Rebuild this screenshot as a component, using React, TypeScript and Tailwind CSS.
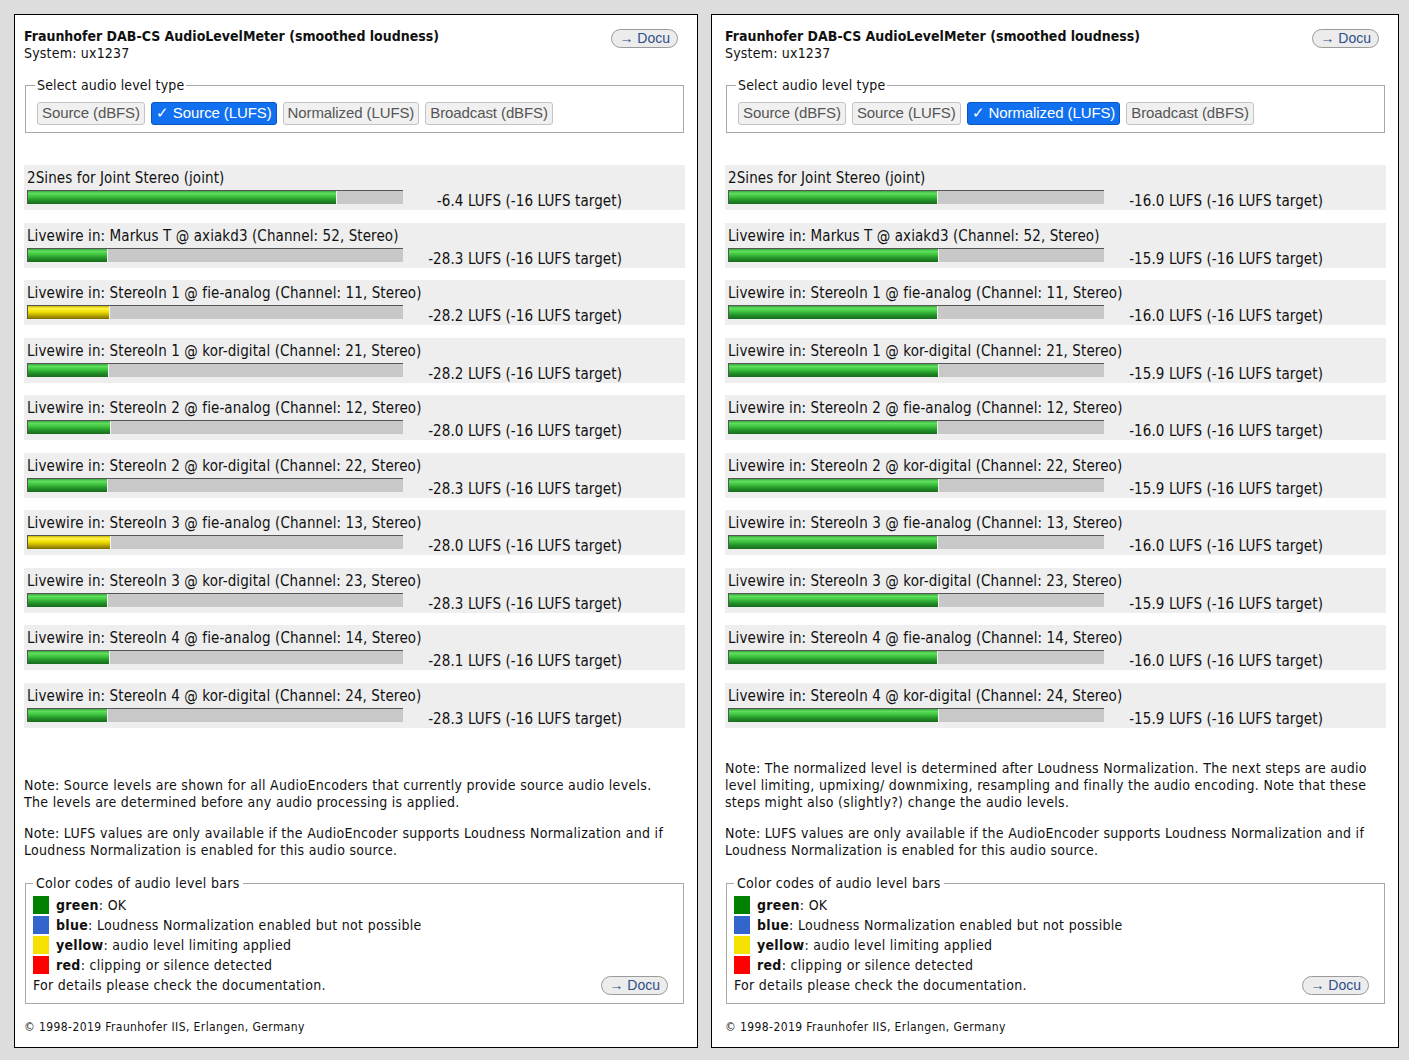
import React from "react"

type Row = { label: string; value: string; fill: number; color: "green" | "yellow" }

const FONT = "font-['DejaVu_Sans_Condensed','DejaVu_Sans',sans-serif]"
const BTN_FONT = "font-['Liberation_Sans',Arial,sans-serif]"

const labels = [
  "2Sines for Joint Stereo (joint)",
  "Livewire in: Markus T @ axiakd3 (Channel: 52, Stereo)",
  "Livewire in: StereoIn 1 @ fie-analog (Channel: 11, Stereo)",
  "Livewire in: StereoIn 1 @ kor-digital (Channel: 21, Stereo)",
  "Livewire in: StereoIn 2 @ fie-analog (Channel: 12, Stereo)",
  "Livewire in: StereoIn 2 @ kor-digital (Channel: 22, Stereo)",
  "Livewire in: StereoIn 3 @ fie-analog (Channel: 13, Stereo)",
  "Livewire in: StereoIn 3 @ kor-digital (Channel: 23, Stereo)",
  "Livewire in: StereoIn 4 @ fie-analog (Channel: 14, Stereo)",
  "Livewire in: StereoIn 4 @ kor-digital (Channel: 24, Stereo)",
]

const leftVals: [string, number, "green" | "yellow"][] = [
  ["-6.4", 309, "green"],
  ["-28.3", 80, "green"],
  ["-28.2", 82, "yellow"],
  ["-28.2", 81, "green"],
  ["-28.0", 83, "green"],
  ["-28.3", 80, "green"],
  ["-28.0", 83, "yellow"],
  ["-28.3", 80, "green"],
  ["-28.1", 82, "green"],
  ["-28.3", 80, "green"],
]

const leftRows: Row[] = labels.map((label, i) => ({
  label, value: leftVals[i][0], fill: leftVals[i][1], color: leftVals[i][2],
}))

const rightRows: Row[] = labels.map((label, i) => ({
  label,
  value: i % 2 === 0 ? "-16.0" : "-15.9",
  fill: i % 2 === 0 ? 209 : 210,
  color: "green",
}))

const GRADIENTS = {
  green:  "linear-gradient(to bottom, #3aa83a 0%, #5fe05f 18%, #3cc03c 45%, #23922a 70%, #176a1a 100%)",
  yellow: "linear-gradient(to bottom, #c8b800 0%, #fff24a 18%, #f0e000 45%, #c0ac00 70%, #7a6c00 100%)",
}

function Docu() {
  return (
    <span className={`${BTN_FONT} inline-flex items-center h-[19px] px-[7px] rounded-full border border-[#9a9a9a] bg-[#ececec] text-[14px] leading-none tracking-normal text-[#2f4f88]`}>
      → Docu
    </span>
  )
}

function Bar({ fill, color }: { fill: number; color: "green" | "yellow" }) {
  return (
    <div className="w-[376px] h-[14px] bg-[#c8c8c8] border-t border-l border-[#555] flex">
      <div
        className="h-full border-r border-[#f4f4f4]"
        style={{ width: fill, background: GRADIENTS[color] }}
      />
    </div>
  )
}

function LevelRow({ row }: { row: Row }) {
  return (
    <div className="h-[45px] bg-[#eeeeee] pl-[3px] pt-[5px] text-[15px] tracking-[0.1px]">
      <div className="leading-[17px] whitespace-nowrap">{row.label}</div>
      <div className="flex items-start mt-[3px]">
        <Bar fill={row.fill} color={row.color} />
        <div className="w-[219px] text-right leading-[17px] mt-[3px] whitespace-nowrap">
          {row.value} LUFS (-16 LUFS target)
        </div>
      </div>
    </div>
  )
}

const BUTTONS = ["Source (dBFS)", "Source (LUFS)", "Normalized (LUFS)", "Broadcast (dBFS)"]

function Panel({ width, padLeft, active, rows, note }: {
  width: string
  padLeft: string
  active: number
  rows: Row[]
  note: React.ReactNode
}) {
  return (
    <div className={`${width} ${padLeft} h-[1034px] bg-white border border-black pr-[12px] pt-[13px] pb-[11px] flex flex-col text-[14px] tracking-[0.3px] text-[#111] ${FONT}`}>
      <div className="flex justify-between items-start">
        <div className="leading-[17px]">
          <div className="font-bold tracking-normal">Fraunhofer DAB-CS AudioLevelMeter (smoothed loudness)</div>
          <div className="tracking-[0.2px]">System: ux1237</div>
        </div>
        <div className="mr-[7px]"><Docu /></div>
      </div>

      <fieldset className="mt-[15px] mx-[1px] border border-[#a8a8a8] pl-[11px] pb-[7px] pt-[8px]">
        <legend className="px-[2px] -ml-[2px] leading-[17px] tracking-[0.15px]">Select audio level type</legend>
        <div className="flex gap-[6px] tracking-[-0.1px]">
          {BUTTONS.map((b, i) => (
            <span
              key={b}
              className={
                i === active
                  ? `${BTN_FONT} h-[23px] px-[4px] flex items-center rounded-[3px] border border-[#0a58c0] bg-[#1170ef] text-white text-[15px]`
                  : `${BTN_FONT} h-[23px] px-[4px] flex items-center rounded-[3px] border border-[#c4c4c4] bg-[#f0f0f0] text-[#555] text-[15px]`
              }
            >
              {i === active ? `✓ ${b}` : b}
            </span>
          ))}
        </div>
      </fieldset>

      <div className="mt-[32px] flex flex-col gap-[12.5px]">
        {rows.map((r, i) => <LevelRow key={i} row={r} />)}
      </div>

      <div className="flex-1" />

      <div className="leading-[17px]">
        {note}
        <p className="mt-[14px]">
          Note: LUFS values are only available if the AudioEncoder supports Loudness Normalization and if<br />
          Loudness Normalization is enabled for this audio source.
        </p>
      </div>

      <fieldset className="mt-[16px] mx-[1px] border border-[#a8a8a8] pl-[7px] pr-[15px] pb-[8px]">
        <legend className="px-[3px] leading-[17px]">Color codes of audio level bars</legend>
        <div className="pt-[3px]">
          {[
            ["green", "bg-[#008000]", "OK"],
            ["blue", "bg-[#3366cc]", "Loudness Normalization enabled but not possible"],
            ["yellow", "bg-[#f5e000]", "audio level limiting applied"],
            ["red", "bg-[#ff0000]", "clipping or silence detected"],
          ].map(([name, cls, text]) => (
            <div key={name} className="flex items-center h-[20px]">
              <span className={`w-[16px] h-[18px] ${cls}`} />
              <span className="ml-[7px]"><b>{name}</b>: {text}</span>
            </div>
          ))}
          <div className="flex justify-between items-center h-[20px]">
            <span>For details please check the documentation.</span>
            <Docu />
          </div>
        </div>
      </fieldset>

      <div className="mt-[15px] text-[12px] leading-[17px] tracking-[0.4px]">© 1998-2019 Fraunhofer IIS, Erlangen, Germany</div>
    </div>
  )
}

export default function App() {
  return (
    <div className="w-[1409px] h-[1060px] bg-[#dddddd] flex gap-[13px] pl-[14px] pt-[14px] overflow-hidden">
      <Panel
        width="w-[684px]"
        padLeft="pl-[9px]"
        active={1}
        rows={leftRows}
        note={
          <p>
            Note: Source levels are shown for all AudioEncoders that currently provide source audio levels.<br />
            The levels are determined before any audio processing is applied.
          </p>
        }
      />
      <Panel
        width="w-[688px]"
        padLeft="pl-[13px]"
        active={2}
        rows={rightRows}
        note={
          <p>
            Note: The normalized level is determined after Loudness Normalization. The next steps are audio<br />
            level limiting, upmixing/ downmixing, resampling and finally the audio encoding. Note that these<br />
            steps might also (slightly?) change the audio levels.
          </p>
        }
      />
    </div>
  )
}
